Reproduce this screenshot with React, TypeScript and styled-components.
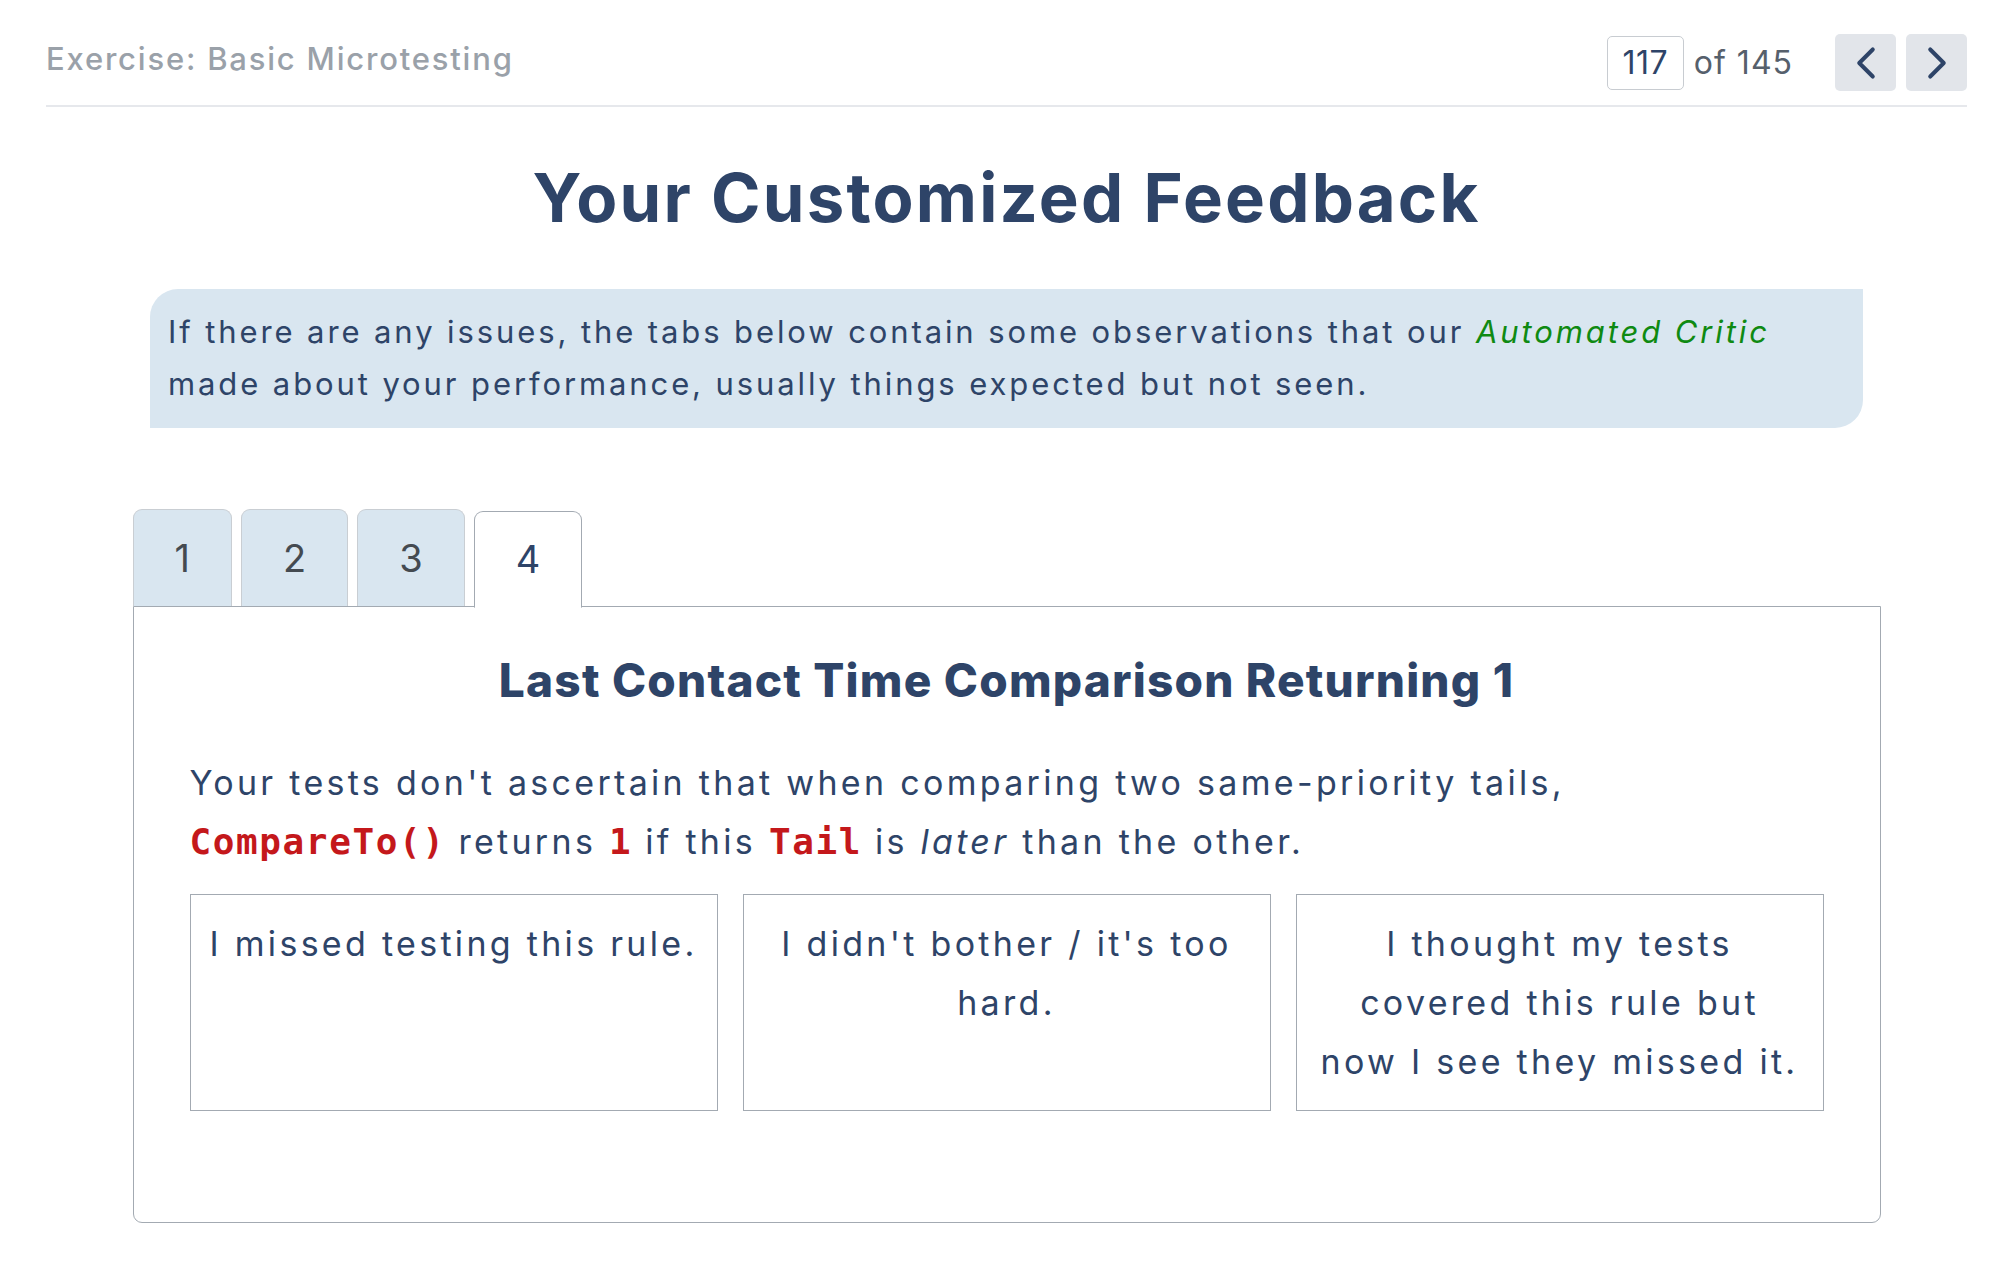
import React, { useState } from 'react';
import styled, { createGlobalStyle } from 'styled-components';
import { ChevronLeft, ChevronRight } from 'lucide-react';

// Global page reset
const GlobalStyle = createGlobalStyle`
	html, body {
		margin: 0;
		padding: 0;
		background: #ffffff;
	}
	body {
		font-family: Inter, "Noto Sans", "Liberation Sans", sans-serif;
		color: #2e4468;
	}
`;

const NAVY = '#2e4468';

// Each choice is given as its lines
const choices = [
	[ 'I missed testing this rule.' ],
	[ "I didn't bother / it's too", 'hard.' ],
	[ 'I thought my tests', 'covered this rule but', 'now I see they missed it.' ],
];

/**
 * Feedback screen
 */
const App: React.FC = () => {
	const [ activeTab, setActiveTab ] = useState(4);

	return (
		<Page>
			<GlobalStyle />
			<Header>
				<ExerciseName>Exercise: Basic Microtesting</ExerciseName>
				<Pager>
					<PageInput value="117" readOnly />
					<PageTotal>of 145</PageTotal>
					<NavGroup>
						<NavButton aria-label="Previous">
							<ChevronLeft size={ 54 } strokeWidth={ 1.8 } />
						</NavButton>
						<NavButton aria-label="Next">
							<ChevronRight size={ 54 } strokeWidth={ 1.8 } />
						</NavButton>
					</NavGroup>
				</Pager>
			</Header>

			<Main>
				<Title>Your Customized Feedback</Title>

				<InfoBox>
					If there are any issues, the tabs below contain some observations that our{ ' ' }
					<Critic>Automated Critic</Critic> made about your performance, usually things expected but not seen.
				</InfoBox>

				<Tabs>
					<TabList>
						{ [ 1, 2, 3, 4 ].map((n) => (
							<Tab key={ n } $active={ n === activeTab } onClick={ () => setActiveTab(n) }>
								{ n }
							</Tab>
						)) }
					</TabList>
					<Panel>
						<PanelTitle>Last Contact Time Comparison Returning 1</PanelTitle>
						<Rule>
							Your tests don't ascertain that when comparing two same-priority tails,{ ' ' }
							<Code>CompareTo()</Code> returns <Code>1</Code> if this <Code>Tail</Code> is <em>later</em> than the other.
						</Rule>
						<Choices>
							{ choices.map((lines) => (
								<Choice key={ lines.join(' ') }>
									{ lines.map((l, i) => (
										<React.Fragment key={ l }>
											{ i > 0 && <br /> }
											{ l }
										</React.Fragment>
									)) }
								</Choice>
							)) }
						</Choices>
					</Panel>
				</Tabs>
			</Main>
		</Page>
	);
};
export default App;

// Styles
const Page = styled.div`
	padding: 0 32px 0 46px;
	min-height: 1270px;
	box-sizing: border-box;
`;

const Header = styled.header`
	display: flex;
	align-items: center;
	justify-content: space-between;
	padding: 34px 0 14px;
	border-bottom: 2px solid #e6e8ec;
`;

const ExerciseName = styled.div`
	font-size: 31px;
	font-weight: 500;
	letter-spacing: 1.8px;
	color: #9aa1a9;
	margin-top: -8px;
`;

const Pager = styled.div`
	display: flex;
	align-items: center;
`;

const PageInput = styled.input`
	width: 77px;
	height: 54px;
	box-sizing: border-box;
	border: 1.5px solid #c8ccd1;
	border-radius: 5px;
	font-family: inherit;
	font-size: 32px;
	letter-spacing: 0.5px;
	color: ${ NAVY };
	text-align: center;
	padding: 0;
	outline: none;
`;

const PageTotal = styled.span`
	margin-left: 10px;
	font-size: 32px;
	letter-spacing: 1px;
	color: #56606c;
`;

const NavGroup = styled.div`
	display: flex;
	gap: 10px;
	margin-left: 42px;
`;

const NavButton = styled.button`
	display: flex;
	align-items: center;
	justify-content: center;
	width: 61px;
	height: 57px;
	border: none;
	border-radius: 5px;
	background: #e2e5ea;
	color: ${ NAVY };
	padding: 0;
	cursor: pointer;
`;

const Main = styled.main`
	display: flex;
	flex-direction: column;
	align-items: center;
`;

const Title = styled.h1`
	margin: 52px 0 0;
	font-size: 67px;
	line-height: 77px;
	font-weight: 700;
	letter-spacing: 2.2px;
	color: ${ NAVY };
`;

const InfoBox = styled.p`
	box-sizing: border-box;
	width: calc(100% - 208px);
	margin: 53px 0 0;
	padding: 17px 18px 18px;
	background: #d9e6f0;
	border-radius: 28px 0 28px 0;
	font-size: 31px;
	line-height: 52px;
	letter-spacing: 2.9px;
	color: ${ NAVY };
`;

const Critic = styled.em`
	color: #0f8a12;
`;

const Tabs = styled.section`
	width: calc(100% - 173px);
	margin-top: 81px;
`;

const TabList = styled.div`
	display: flex;
	gap: 9px;
	align-items: flex-end;
`;

const Tab = styled.button<{ $active?: boolean }>`
	height: 97px;
	padding: 0 41px;
	box-sizing: border-box;
	border: 1.5px solid ${ (p) => (p.$active ? '#a3aab2' : '#c9ced3') };
	border-bottom: ${ (p) => (p.$active ? '1.5px solid #ffffff' : 'none') };
	border-radius: 9px 9px 0 0;
	background: ${ (p) => (p.$active ? '#ffffff' : '#d9e6f0') };
	color: ${ (p) => (p.$active ? NAVY : '#444a50') };
	font-family: inherit;
	font-size: 38px;
	margin-bottom: ${ (p) => (p.$active ? '-1.5px' : '0') };
	position: relative;
	cursor: pointer;
`;

const Panel = styled.div`
	border: 1.5px solid #a3aab2;
	border-radius: 0 0 9px 9px;
	padding: 46px 56px 111px;
	display: flex;
	flex-direction: column;
`;

const PanelTitle = styled.h2`
	margin: 0;
	text-align: center;
	font-size: 46px;
	line-height: 55px;
	font-weight: 800;
	letter-spacing: 1.2px;
	color: ${ NAVY };
`;

const Rule = styled.p`
	margin: 45px 0 0;
	font-size: 34px;
	line-height: 59px;
	letter-spacing: 3.3px;
	color: ${ NAVY };

	em {
		font-style: italic;
	}
`;

const Code = styled.code`
	font-family: "DejaVu Sans Mono", "Liberation Mono", monospace;
	font-weight: 700;
	font-size: 36px;
	letter-spacing: 1.6px;
	color: #c4181b;
`;

const Choices = styled.div`
	display: grid;
	grid-template-columns: repeat(3, 1fr);
	gap: 25px;
	margin-top: 23px;
`;

const Choice = styled.div`
	border: 1.5px solid #a3aab2;
	padding: 19px 12px;
	text-align: center;
	font-size: 34px;
	line-height: 59px;
	letter-spacing: 3.3px;
	color: ${ NAVY };
`;
